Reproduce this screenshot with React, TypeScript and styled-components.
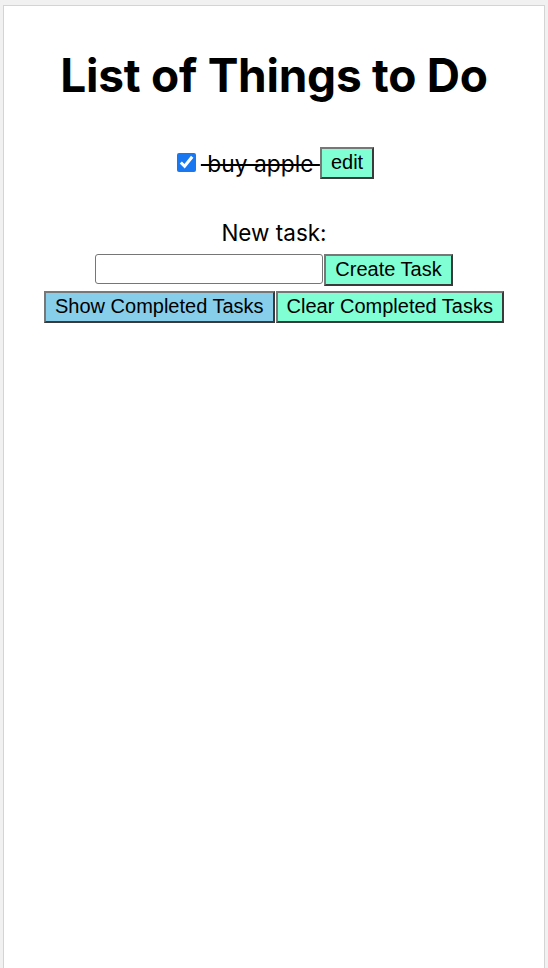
import React, { useState } from "react";
import styled, { createGlobalStyle } from "styled-components";

const Global = createGlobalStyle`
  html, body { margin: 0; padding: 0; background: #f1f1f1; }
  body { font-family: Inter, "Noto Sans", sans-serif; color: #000; }
  #root { padding: 5px 3px 2px 3px; }
`;

const Panel = styled.div`
  height: 959px;
  background: #ffffff;
  border: 1px solid #d4d4d4;
  padding-top: 41px;
  box-sizing: content-box;
  display: flex;
  flex-direction: column;
  align-items: center;
`;

const Title = styled.h1`
  margin: 0;
  font-family: Inter, sans-serif;
  font-weight: 700;
  font-size: 46px;
  line-height: 56px;
  letter-spacing: -0.25px;
`;

const TaskRow = styled.div`
  margin-top: 44px;
  display: flex;
  align-items: center;
  padding-left: 3px;
`;

const Check = styled.input`
  width: 19px;
  height: 19px;
  margin: 0 5px 2px 0;
  accent-color: #1a77f2;
`;

const TaskText = styled.span<{ $done: boolean }>`
  font-size: 22.8px;
  white-space: pre;
  text-decoration: ${(p) => (p.$done ? "line-through" : "none")};
`;

const Button = styled.button<{ $bg: string }>`
  font-family: "Liberation Sans", Arial, sans-serif;
  font-size: 20px;
  line-height: 23px;
  padding: 2px 9px 3px;
  margin: 0;
  background: ${(p) => p.$bg};
  border: 2px solid;
  border-color: #777777 #3a3a3a #3a3a3a #777777;
  color: #000;
  cursor: pointer;
`;

const Label = styled.label`
  margin-top: 41px;
  font-size: 22.5px;
  line-height: 26px;
`;

const InputRow = styled.div`
  margin-top: 8px;
  display: flex;
  gap: 1px;
`;

const TextInput = styled.input`
  width: 226px;
  height: 28px;
  box-sizing: content-box;
  padding: 0;
  margin: 0;
  border: 1px solid #767676;
  border-radius: 3px;
  font-size: 18px;
`;

const ActionRow = styled.div`
  margin-top: 5px;
  display: flex;
  gap: 1px;
`;

export default function App() {
  const [done, setDone] = useState(true);
  return (
    <>
      <Global />
      <Panel>
        <Title>List of Things to Do</Title>
        <TaskRow>
          <Check type="checkbox" checked={done} onChange={() => setDone(!done)} />
          <TaskText $done={done}>{" buy apple "}</TaskText>
          <Button $bg="#80ffd4">edit</Button>
        </TaskRow>
        <Label htmlFor="newtask">New task:</Label>
        <InputRow>
          <TextInput id="newtask" type="text" />
          <Button $bg="#80ffd4">Create Task</Button>
        </InputRow>
        <ActionRow>
          <Button $bg="#87ceeb">Show Completed Tasks</Button>
          <Button $bg="#80ffd4">Clear Completed Tasks</Button>
        </ActionRow>
      </Panel>
    </>
  );
}
